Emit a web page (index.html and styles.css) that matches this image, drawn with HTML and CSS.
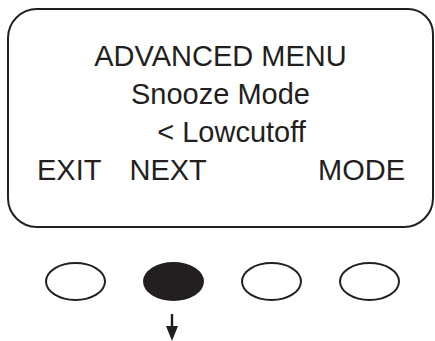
FILE: index.html
```html
<!DOCTYPE html>
<html>
<head>
	<title>Advanced Menu</title>
	<meta charset="utf-8">
	<link rel="stylesheet" href="styles.css">
</head>
<body>
	<div class="screen">
		<div class="line">ADVANCED MENU</div>
		<div class="line">Snooze Mode</div>
		<div class="line shift">&lt; Lowcutoff</div>
		<div class="line keys">
			<span>EXIT</span>
			<span class="next">NEXT</span>
			<span class="mode">MODE</span>
		</div>
	</div>
	<div class="buttons">
		<div class="btn"></div>
		<div class="btn on"></div>
		<div class="btn"></div>
		<div class="btn"></div>
	</div>
	<div class="arrow">
		<svg width="14" height="27" viewBox="0 0 14 27">
			<line x1="7" y1="0" x2="7" y2="16" stroke="#231f20" stroke-width="2.4"/>
			<polygon points="1,12 13,12 7,27" fill="#231f20"/>
		</svg>
	</div>
</body>
</html>
```

FILE: styles.css
```css
*{
	margin:0;
	padding:0;
	box-sizing:border-box;
}
body{
	background:#fff;
	color:#231f20;
	font-family:"Liberation Sans", Arial, sans-serif;
	width:435px;
	height:341px;
	overflow:hidden;
}
.screen{
	margin:8px 1px 0 7px;
	height:220px;
	border:2.5px solid #231f20;
	border-radius:30px 26px 30px 30px;
	padding-top:27px;
}
.line{
	font-size:29px;
	line-height:38px;
	text-align:center;
}
.shift{
	padding-left:22px;
}
.keys{
	display:flex;
	padding:0 27px 0 28px;
}
.next{
	margin-left:28px;
}
.mode{
	margin-left:auto;
}
.buttons{
	display:flex;
	gap:37px;
	margin:34px 0 0 45px;
}
.btn{
	width:61px;
	height:39px;
	border:2.5px solid #231f20;
	border-radius:50%;
}
.btn.on{
	background:#231f20;
}
.arrow{
	margin:13px 0 0 165px;
	height:27px;
}
.arrow svg{
	display:block;
}
```
